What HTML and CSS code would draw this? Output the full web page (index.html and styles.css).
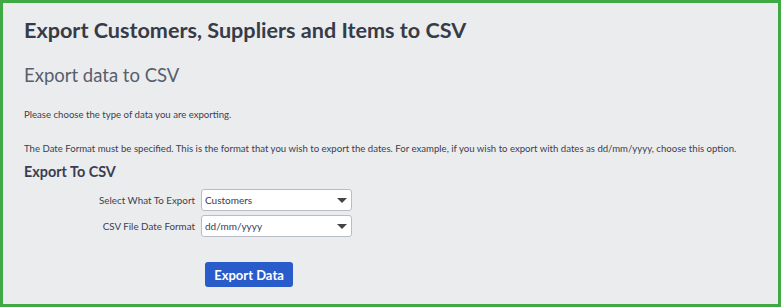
FILE: index.html
```html
<!DOCTYPE html>
<html lang="en">
<head>
    <meta charset="UTF-8">
    <link rel="stylesheet" href="styles.css">
</head>
<body>
    <div class="page">
        <h1 class="page-title">Export Customers, Suppliers and Items to CSV</h1>
        <h2 class="sub-title">Export data to CSV</h2>
        <p class="info">Please choose the type of data you are exporting.</p>
        <p class="info">The Date Format must be specified. This is the format that you wish to export the dates. For example, if you wish to export with dates as dd/mm/yyyy, choose this option.</p>
        <h3 class="section-title">Export To CSV</h3>
        <div class="form-grid">
            <label class="form-label" for="exportType">Select What To Export</label>
            <select id="exportType" class="form-select">
                <option>Customers</option>
                <option>Suppliers</option>
                <option>Items</option>
            </select>
            <label class="form-label" for="dateFormat">CSV File Date Format</label>
            <select id="dateFormat" class="form-select">
                <option>dd/mm/yyyy</option>
                <option>mm/dd/yyyy</option>
                <option>yyyy/mm/dd</option>
            </select>
        </div>
        <div class="actions">
            <button class="export-button">Export Data</button>
        </div>
    </div>
</body>
</html>
```

FILE: styles.css
```css
html, body {
    height: 100%;
}

body {
    font-family: 'Lato', 'Liberation Sans', sans-serif;
    margin: 0;
    background-color: #ebecee;
    color: #3b3e50;
}

.page {
    box-sizing: border-box;
    height: 100%;
    border: 3px solid #3faa44;
    padding: 13px 21px 0;
}

.page-title {
    font-size: 21.6px;
    font-weight: 700;
    color: #363b48;
    margin: 0 0 19px;
    line-height: 28px;
}

.sub-title {
    font-size: 18.5px;
    font-weight: 400;
    color: #575e6c;
    margin: 0 0 21px;
    line-height: 24px;
}

.info {
    font-size: 9.6px;
    margin: 0 0 21px;
    line-height: 13px;
}

.info + .info {
    margin-bottom: 8px;
}

.section-title {
    font-size: 14.4px;
    font-weight: 700;
    color: #3a3d50;
    margin: 0 0 8px;
    line-height: 18px;
}

.form-grid {
    display: grid;
    grid-template-columns: 171px 151px;
    column-gap: 6px;
    row-gap: 4px;
    align-items: center;
}

.form-label {
    font-size: 9.8px;
    text-align: right;
}

.form-select {
    box-sizing: border-box;
    height: 22px;
    width: 151px;
    font-family: 'Lato', sans-serif;
    font-size: 10px;
    color: #383c58;
    background: white url("data:image/svg+xml,%3Csvg xmlns='http://www.w3.org/2000/svg' width='10' height='5'%3E%3Cpath d='M0 0h10L5 5z' fill='%23444'/%3E%3C/svg%3E") no-repeat right 4px center;
    border: 1px solid #b9bcc8;
    border-radius: 3px;
    padding: 0 3px;
    appearance: none;
    -webkit-appearance: none;
}

.actions {
    padding: 25px 0 0 181px;
}

.export-button {
    width: 88px;
    height: 25px;
    background-color: #2a5bcb;
    color: white;
    border: none;
    border-radius: 3px;
    font-family: 'Lato', sans-serif;
    font-size: 13px;
    font-weight: 700;
    padding: 0;
}
```
